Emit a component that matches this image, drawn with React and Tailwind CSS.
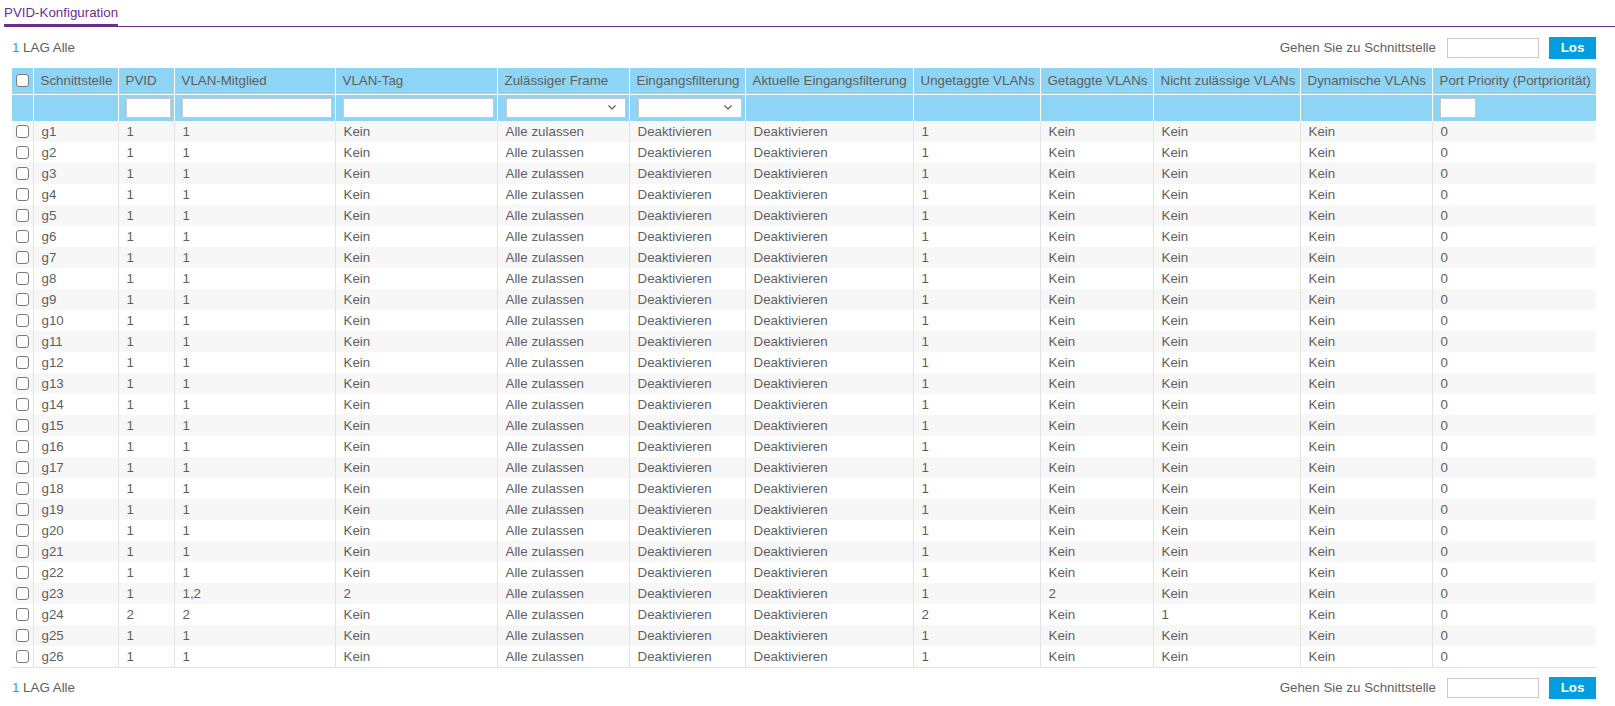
import React from 'react';

const columns = [
  { key: 'cb', label: '', width: 21 },
  { key: 'port', label: 'Schnittstelle', width: 85 },
  { key: 'pvid', label: 'PVID', width: 56, filter: 'input' },
  { key: 'member', label: 'VLAN-Mitglied', width: 161, filter: 'input' },
  { key: 'tag', label: 'VLAN-Tag', width: 162, filter: 'input' },
  { key: 'frame', label: 'Zulässiger Frame', width: 132, filter: 'select' },
  { key: 'ingress', label: 'Eingangsfilterung', width: 116, filter: 'select' },
  { key: 'current', label: 'Aktuelle Eingangsfilterung', width: 168 },
  { key: 'untagged', label: 'Ungetaggte VLANs', width: 127 },
  { key: 'tagged', label: 'Getaggte VLANs', width: 113 },
  { key: 'forbidden', label: 'Nicht zulässige VLANs', width: 147 },
  { key: 'dynamic', label: 'Dynamische VLANs', width: 132 },
  { key: 'prio', label: 'Port Priority (Portpriorität)', width: 164, filter: 'small' },
];

const rows = Array.from({ length: 26 }, (_, i) => {
  const n = i + 1;
  const base = {
    port: 'g' + n,
    pvid: '1',
    member: '1',
    tag: 'Kein',
    frame: 'Alle zulassen',
    ingress: 'Deaktivieren',
    current: 'Deaktivieren',
    untagged: '1',
    tagged: 'Kein',
    forbidden: 'Kein',
    dynamic: 'Kein',
    prio: '0',
  };
  if (n === 23) return { ...base, member: '1,2', tag: '2', tagged: '2' };
  if (n === 24) return { ...base, pvid: '2', member: '2', untagged: '2', forbidden: '1' };
  return base;
});

function Box() {
  return <span className="block w-[13px] h-[13px] rounded-[3px] border border-[#7a7a7a] bg-white" />;
}

function Pager() {
  return (
    <div className="flex items-center justify-between h-[24px]">
      <div className="text-[13.33px]">
        <span className="text-[#2a9fdc]">1</span> LAG Alle
      </div>
      <div className="flex items-center">
        <span className="text-[13.33px]">Gehen Sie zu Schnittstelle</span>
        <input className="ml-[11px] w-[92px] h-[20px] border border-[#c8c8c8] bg-white outline-none" />
        <button className="ml-[10px] w-[47px] h-[22px] bg-[#049ddf] text-white text-[13.33px] font-bold">Los</button>
      </div>
    </div>
  );
}

function FilterCell({ type }) {
  if (type === 'input') {
    return <div className="ml-[7px] mr-[3px] h-[20px] border border-[#c8c8c8] bg-white" />;
  }
  if (type === 'small') {
    return <div className="ml-[7px] w-[36px] h-[20px] border border-[#c8c8c8] bg-white" />;
  }
  if (type === 'select') {
    return (
      <div className="ml-[8px] mr-[3px] h-[20px] border border-[#c8c8c8] bg-white flex items-center justify-end pr-[9px]">
        <svg width="8" height="5" viewBox="0 0 8 5">
          <polyline points="0.5,0.5 4,4 7.5,0.5" fill="none" stroke="#555" strokeWidth="1.1" />
        </svg>
      </div>
    );
  }
  return null;
}

export default function App() {
  return (
    <div className="min-h-screen bg-white text-[#5f5f5f] font-['Liberation_Sans',Arial,sans-serif]">
      <div className="pl-1 pt-[5px]">
        <div className="border-b-[1.5px] border-[#6c2d91] flex">
          <div className="text-[13.33px] text-[#6c2d91] leading-[15px] pb-[4px] border-b-[3px] border-[#6c2d91] -mb-[1.5px] w-[114px] whitespace-nowrap">
            PVID-Konfiguration
          </div>
        </div>
      </div>

      <div className="pl-3 pr-[19px]">
        <div className="mt-[9px]">
          <Pager />
        </div>

        <table className="mt-[8px] table-fixed border-collapse w-[1584px] text-[13.33px]">
          <colgroup>
            {columns.map((c) => (
              <col key={c.key} style={{ width: c.width }} />
            ))}
          </colgroup>
          <thead>
            <tr className="bg-[#8dd4f5] h-[27px]">
              {columns.map((c, i) => (
                <th
                  key={c.key}
                  className={`font-normal text-left whitespace-nowrap border-b border-white ${i > 0 ? 'border-l border-white pl-[7px]' : 'pl-[4px]'}`}
                >
                  {c.key === 'cb' ? <Box /> : c.label}
                </th>
              ))}
            </tr>
            <tr className="bg-[#8dd4f5] h-[26px]">
              {columns.map((c, i) => (
                <th key={c.key} className={`p-0 font-normal ${i > 0 ? 'border-l border-white' : ''}`}>
                  <FilterCell type={c.filter} />
                </th>
              ))}
            </tr>
          </thead>
          <tbody>
            {rows.map((r, idx) => (
              <tr key={r.port} className={`h-[21px] ${idx % 2 === 0 ? 'bg-[#f7f7f7]' : 'bg-white'}`}>
                <td className="pl-[4px]">
                  <Box />
                </td>
                {columns.slice(1).map((c) => (
                  <td key={c.key} className="border-l border-[#e4e4e4] pl-[8px] whitespace-nowrap leading-[21px]">
                    {r[c.key]}
                  </td>
                ))}
              </tr>
            ))}
            <tr className="h-0 border-t border-[#e0e0e0]">
              <td colSpan={columns.length} className="p-0" />
            </tr>
          </tbody>
        </table>

        <div className="mt-[8px]">
          <Pager />
        </div>
      </div>
    </div>
  );
}
